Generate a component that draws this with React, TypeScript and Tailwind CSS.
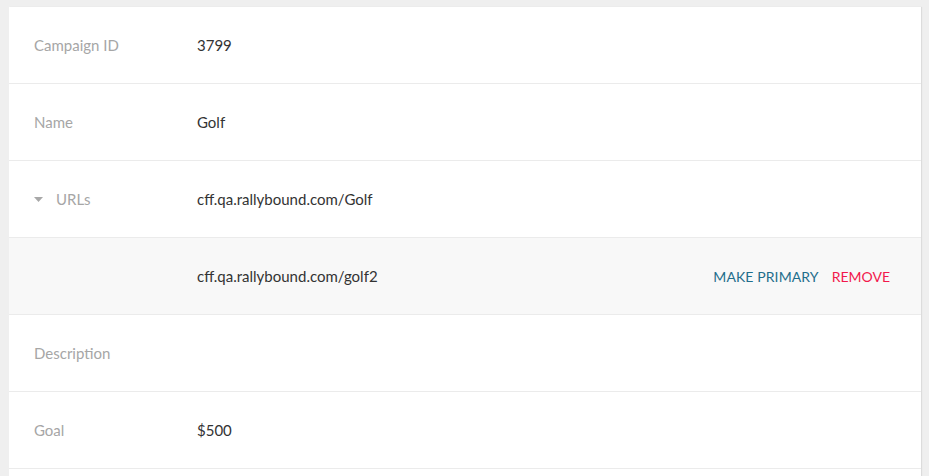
import React from "react";

type Row = {
  label: string;
  value?: string;
  caret?: boolean;
  sub?: boolean;
};

const rows: Row[] = [
  { label: "Campaign ID", value: "3799" },
  { label: "Name", value: "Golf" },
  { label: "URLs", value: "cff.qa.rallybound.com/Golf", caret: true },
  { label: "", value: "cff.qa.rallybound.com/golf2", sub: true },
  { label: "Description" },
  { label: "Goal", value: "$500" },
  { label: "" },
];

function Caret() {
  return (
    <svg width="9" height="5" viewBox="0 0 9 5" className="mr-[13px]">
      <path d="M0 0h9L4.5 5z" fill="#a8a8a8" />
    </svg>
  );
}

export default function App() {
  return (
    <div
      className="min-h-screen h-[476px] overflow-hidden bg-[#efefef] pt-[7px] pl-[9px] pr-[8px]"
      style={{ fontFamily: "Lato, 'Open Sans', sans-serif" }}
    >
      <div className="bg-white shadow-[1px_0_1px_rgba(0,0,0,0.08)]">
        {rows.map((row, i) => (
          <div
            key={i}
            className={`flex items-center h-[77px] border-b border-[#ebebeb] text-[15px] ${
              row.sub ? "bg-[#f8f8f8]" : ""
            }`}
          >
            <div className="w-[188px] pl-[25px] flex items-center text-[#a6a6a6]">
              {row.caret && <Caret />}
              {row.label}
            </div>
            <div className="flex-1 text-[#333333]">{row.value}</div>
            {row.sub && (
              <div className="flex items-center gap-[13px] pr-[31px] text-[14px]">
                <button className="text-[#1f6e8c] tracking-[0.1px]">MAKE PRIMARY</button>
                <button className="text-[#f2184c]">REMOVE</button>
              </div>
            )}
          </div>
        ))}
      </div>
    </div>
  );
}
